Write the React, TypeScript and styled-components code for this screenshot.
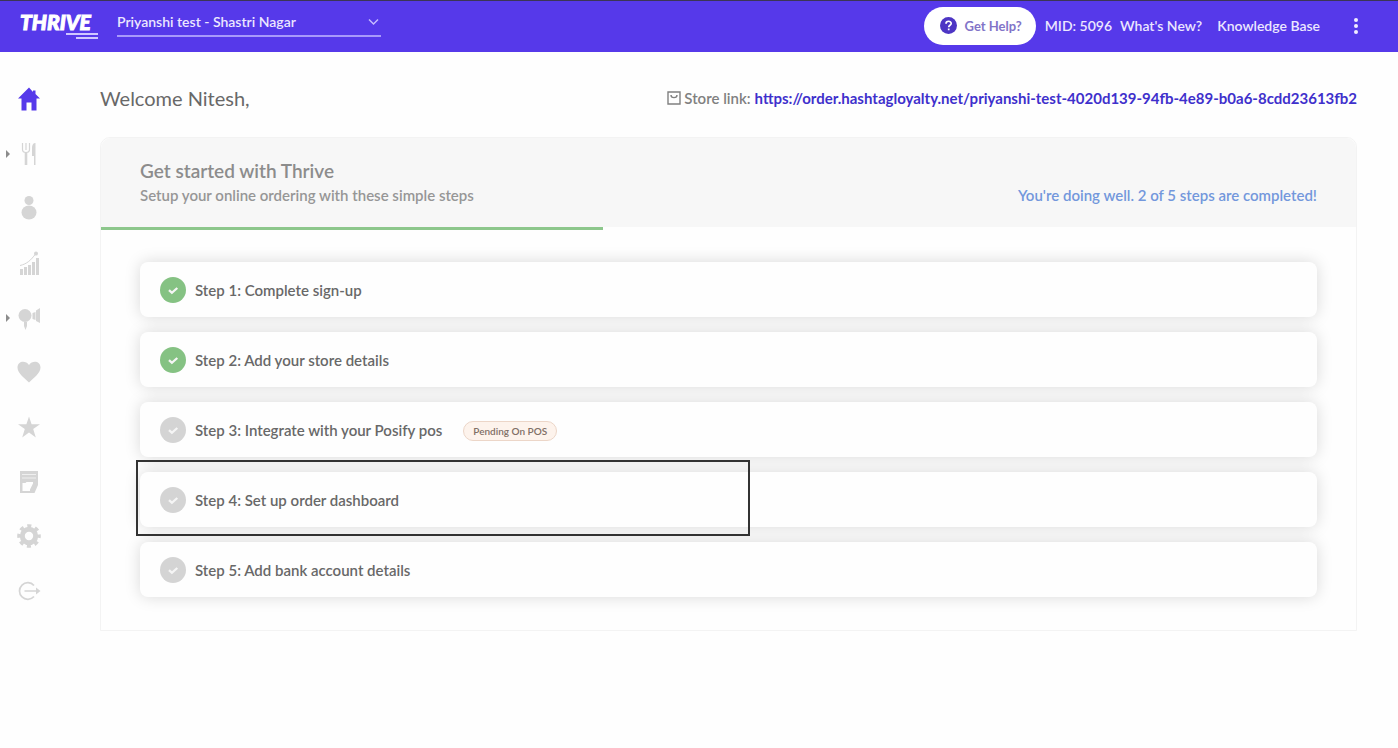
import React from "react";
import styled, { createGlobalStyle } from "styled-components";

const GlobalStyle = createGlobalStyle`
  *, *::before, *::after { box-sizing: border-box; }
  body {
    margin: 0;
    background: #fefefe;
    color: #686868;
    font-family: Lato, "Open Sans", sans-serif;
    font-size: 15px;
    font-weight: 600;
    line-height: 20px;
  }
  button, select { font: inherit; color: inherit; }
  h1, h2, p, ol, ul { margin: 0; padding: 0; }
  ol, ul { list-style: none; }
  a { text-decoration: none; color: inherit; }
  svg { display: block; flex: none; }
`;

const TopBar = styled.header`
  display: flex;
  align-items: center;
  height: 52px;
  padding: 0 33px 2px 20px;
  border-top: 1px solid #3b3556;
  background: #5639ea;
  color: #ece7ff;
  font-size: 14px;
`;

const Logo = styled.a`
  display: flex;
  flex-direction: column;
  width: 78px;
  color: #fff;
  font-size: 21px;
  font-weight: 900;
  font-style: italic;
  line-height: 22px;
  -webkit-text-stroke: 1px #fff;
  svg { align-self: flex-end; }
`;

const StorePicker = styled.label`
  display: flex;
  align-items: center;
  width: 264px;
  height: 28px;
  margin: 0 auto 5px 19px;
  border-bottom: 2px solid #a899fb;
`;

const StoreSelect = styled.select`
  flex: 1;
  margin-right: -20px;
  padding: 0;
  border: 0;
  outline: 0;
  appearance: none;
  background: transparent;
  option { color: #333; }
`;

const HelpButton = styled.button`
  display: flex;
  align-items: center;
  gap: 8px;
  height: 38px;
  padding: 0 14px 0 16px;
  border: 0;
  border-radius: 19px;
  background: #fff;
  color: #8274c8;
  font-size: 13px;
  font-weight: 700;
`;

const TopLinks = styled.nav`
  display: flex;
  align-items: center;
  margin-left: 9px;
  a:first-of-type { margin: 0 15px 0 8px; }
`;

const MenuButton = styled.button`
  display: grid;
  place-items: center;
  width: 18px;
  height: 24px;
  margin-left: 27px;
  padding: 0;
  border: 0;
  background: none;
`;

const Body = styled.div`
  display: grid;
  grid-template-columns: 60px 1fr;
`;

const SideNav = styled.nav`
  display: flex;
  flex-direction: column;
  justify-content: space-between;
  padding: 35px 0 28px 6px;
`;

const SideItem = styled.a<{ $active?: boolean }>`
  display: grid;
  grid-template-columns: 4px 24px;
  gap: 7px;
  align-items: center;
  height: 24px;
  color: ${(p) => (p.$active ? "#5639ea" : "#d5d5d5")};
  svg:last-child { grid-column: 2; }
`;

const Main = styled.main`
  min-width: 0;
  padding: 33px 41px 0 40px;
`;

const Greeting = styled.div`
  display: flex;
  align-items: center;
  justify-content: space-between;
  height: 26px;
  margin-bottom: 26px;
`;

const Welcome = styled.h1`
  font-size: 20px;
  font-weight: 400;
  line-height: 26px;
`;

const StoreLink = styled.p`
  display: flex;
  align-items: center;
  gap: 3px;
  color: #808080;
  a { margin-left: 1px; color: #3e30cc; font-weight: 700; }
`;

const Panel = styled.section`
  border: 1px solid #f3f3f3;
  border-radius: 10px 10px 0 0;
`;

const PanelHead = styled.div`
  display: flex;
  align-items: flex-end;
  justify-content: space-between;
  height: 89px;
  padding: 0 39px 22px;
  border-radius: 10px 10px 0 0;
  background: #f7f7f7;
  color: #969696;
`;

const PanelTitle = styled.h2`
  color: #8c8c8c;
  font-size: 19px;
  font-weight: 600;
  line-height: 28px;
`;

const Status = styled.p`
  color: #7397dc;
`;

const Progress = styled.div<{ $percent: number }>`
  width: ${(p) => p.$percent}%;
  height: 3px;
  background: #8dc78c;
`;

const Steps = styled.ol`
  display: flex;
  flex-direction: column;
  gap: 15px;
  padding: 32px 39px 33px;
`;

const Step = styled.li`
  position: relative;
  display: flex;
  align-items: center;
  gap: 9px;
  height: 55px;
  padding: 0 20px;
  border-radius: 8px;
  background: #fefefe;
  box-shadow: 0 0 16px rgba(0, 0, 0, 0.15);
`;

const Highlight = styled.span`
  position: absolute;
  z-index: 1;
  top: -12px;
  bottom: -9px;
  left: -4px;
  width: 52.2%;
  border: 2px solid #333;
`;

const Tag = styled.span`
  margin: 2px 0 0 12px;
  padding: 0 9px;
  border: 1px solid #ecd6c8;
  border-radius: 10px;
  background: #fdf3ec;
  color: #806f66;
  font-size: 10px;
  line-height: 18px;
`;

const Check = ({ done }: { done: boolean }) => (
  <svg width="26" height="26" viewBox="0 0 26 26" aria-hidden="true">
    <circle cx="13" cy="13" r="13" fill={done ? "#85c283" : "#d4d4d4"} />
    <path d="M9 13.2l2.900 2.600 5.400-4.800" fill="none" stroke="#f5f5f5" strokeWidth="2.300" />
  </svg>
);

const navItems: { label: string; expands?: boolean; icon: React.ReactNode }[] = [
  {
    label: "Home",
    icon: <path d="M12 0.5L1 11.5h3.500V23.500h5v-8h5v8h5V11.500H23L18.500 7V3.500h-2.500v1.500z" fill="currentColor" />,
  },
  {
    label: "Menu",
    expands: true,
    icon: (
      <g fill="none" stroke="currentColor">
        <path d="M5.500 1v6.500c0 4 7 4 7 0V1M9 1v7" strokeWidth="1.200" />
        <path d="M9 10v13" strokeWidth="2.600" />
        <path d="M18.500 1v22h-1.500v-9h-2V6c0-3 1-5 3.500-5z" fill="currentColor" stroke="none" />
      </g>
    ),
  },
  {
    label: "Customers",
    icon: (
      <g fill="currentColor">
        <circle cx="12" cy="4.500" r="4.500" />
        <ellipse cx="12" cy="16.500" rx="7.500" ry="7" />
      </g>
    ),
  },
  {
    label: "Reports",
    icon: (
      <g fill="currentColor">
        <path d="M3 18h3v6H3zM7 16h3v8H7zM11 14h3v10h-3zM15 11h3v13h-3zM19 7h3v17h-3z" />
        <path d="M3 14.500C10 13 14 9 18.500 3" fill="none" stroke="currentColor" />
        <circle cx="19" cy="2.500" r="2" />
      </g>
    ),
  },
  {
    label: "Marketing",
    expands: true,
    icon: (
      <g fill="currentColor">
        <circle cx="8" cy="9.500" r="6.500" />
        <path d="M7 16h3v4l-1.500 4L7 20zM15.500 7l3-1v8l-3-1zM19 4.500L23 2v15L19 15z" />
      </g>
    ),
  },
  {
    label: "Loyalty",
    icon: <path d="M12 22.500C8 18.500 .500 13.500 .500 7.500.500 1 8.500-.200 12 5c3.500-5.200 11.500-4 11.500 2.500 0 6-7.500 11-11.500 15z" fill="currentColor" />,
  },
  {
    label: "Reviews",
    icon: <path d="M12 1.500l2.600 7.700H23l-6.800 4.800 2.600 8.500L12 17.500 5.200 22.500l2.600-8.500L1 9.200h8.400z" fill="currentColor" />,
  },
  {
    label: "Billing",
    icon: (
      <g fill="currentColor">
        <path d="M3 1h18v14l-3.500 8H3zM5.500 13v8H13v-1.500l3-6V12H9.500l-1 1z" fillRule="evenodd" />
        <path d="M5 4.500h14M5 8h14" stroke="#efefef" />
      </g>
    ),
  },
  {
    label: "Settings",
    icon: (
      <g fill="none" stroke="currentColor">
        <circle cx="12" cy="12" r="6.700" strokeWidth="5" />
        <circle cx="12" cy="12" r="10" strokeWidth="3.600" strokeDasharray="4 3.854" strokeDashoffset="2" />
      </g>
    ),
  },
  {
    label: "Log out",
    icon: (
      <g fill="none" stroke="currentColor" strokeWidth="1.700">
        <path d="M17 6.500A8.300 8.300 0 1 0 17 17.500M7.500 12H20" />
        <path d="M19 8.500v7l4.500-3.500z" fill="currentColor" stroke="none" />
      </g>
    ),
  },
];

const steps = [
  { text: "Step 1: Complete sign-up", done: true },
  { text: "Step 2: Add your store details", done: true },
  { text: "Step 3: Integrate with your Posify pos", done: false, tag: "Pending On POS" },
  { text: "Step 4: Set up order dashboard", done: false, highlighted: true },
  { text: "Step 5: Add bank account details", done: false },
];

export default function App() {
  const percent = (steps.filter((s) => s.done).length / steps.length) * 100;
  return (
    <>
      <GlobalStyle />
      <TopBar>
        <Logo href="#">
          THRIVE
          <svg width="32" height="7" viewBox="0 0 32 7" aria-hidden="true">
            <path d="M0 0h32v2H0zM10 4h22v2H10z" fill="#cfc6ff" />
          </svg>
        </Logo>
        <StorePicker>
          <StoreSelect aria-label="Store">
            <option>Priyanshi test - Shastri Nagar</option>
          </StoreSelect>
          <svg width="20" height="8" viewBox="0 0 20 8" aria-hidden="true">
            <path d="M8 1.500l4.500 4.500L17 1.500" fill="none" stroke="#c5baff" strokeWidth="1.500" />
          </svg>
        </StorePicker>
        <HelpButton type="button">
          <svg width="17" height="17" viewBox="0 0 17 17" aria-hidden="true">
            <circle cx="8.500" cy="8.500" r="8.500" fill="#4d35c4" />
            <path d="M6 6.700c0-3.200 5.200-3.200 5.200-.200 0 1.800-2.500 1.800-2.500 3.700M8.700 11.500v1.800" fill="none" stroke="#fff" strokeWidth="1.700" />
          </svg>
          Get Help?
        </HelpButton>
        <TopLinks aria-label="Account">
          <span>MID: 5096</span>
          <a href="#new">What's New?</a>
          <a href="#kb">Knowledge Base</a>
        </TopLinks>
        <MenuButton type="button" aria-label="More">
          <svg width="4" height="16" viewBox="0 0 4 16" fill="#f1edff">
            <circle cx="2" cy="2" r="2" />
            <circle cx="2" cy="8" r="2" />
            <circle cx="2" cy="14" r="2" />
          </svg>
        </MenuButton>
      </TopBar>
      <Body>
        <SideNav aria-label="Main">
          {navItems.map((item, i) => (
            <SideItem key={item.label} href="#" aria-label={item.label} $active={i === 0}>
              {item.expands && (
                <svg width="4" height="8" viewBox="0 0 4 8">
                  <path d="M0 0l4 4-4 4z" fill="#8c8c8c" />
                </svg>
              )}
              <svg width="24" height="24" viewBox="0 0 24 24">{item.icon}</svg>
            </SideItem>
          ))}
        </SideNav>
        <Main>
          <Greeting>
            <Welcome>Welcome Nitesh,</Welcome>
            <StoreLink>
              <svg width="14" height="14" viewBox="0 0 14 14" aria-hidden="true">
                <path d="M1 1h12v12H1zM4 4c0 3.500 6 3.500 6 0" fill="none" stroke="#808080" strokeWidth="1.400" />
              </svg>
              Store link:
              <a href="https://order.hashtagloyalty.net/priyanshi-test-4020d139-94fb-4e89-b0a6-8cdd23613fb2">
                https://order.hashtagloyalty.net/priyanshi-test-4020d139-94fb-4e89-b0a6-8cdd23613fb2
              </a>
            </StoreLink>
          </Greeting>
          <Panel>
            <PanelHead>
              <div>
                <PanelTitle>Get started with Thrive</PanelTitle>
                <p>Setup your online ordering with these simple steps</p>
              </div>
              <Status>You're doing well. 2 of 5 steps are completed!</Status>
            </PanelHead>
            <Progress $percent={percent} />
            <Steps>
              {steps.map((s) => (
                <Step key={s.text}>
                  <Check done={s.done} />
                  {s.text}
                  {s.tag && <Tag>{s.tag}</Tag>}
                  {s.highlighted && <Highlight />}
                </Step>
              ))}
            </Steps>
          </Panel>
        </Main>
      </Body>
    </>
  );
}
